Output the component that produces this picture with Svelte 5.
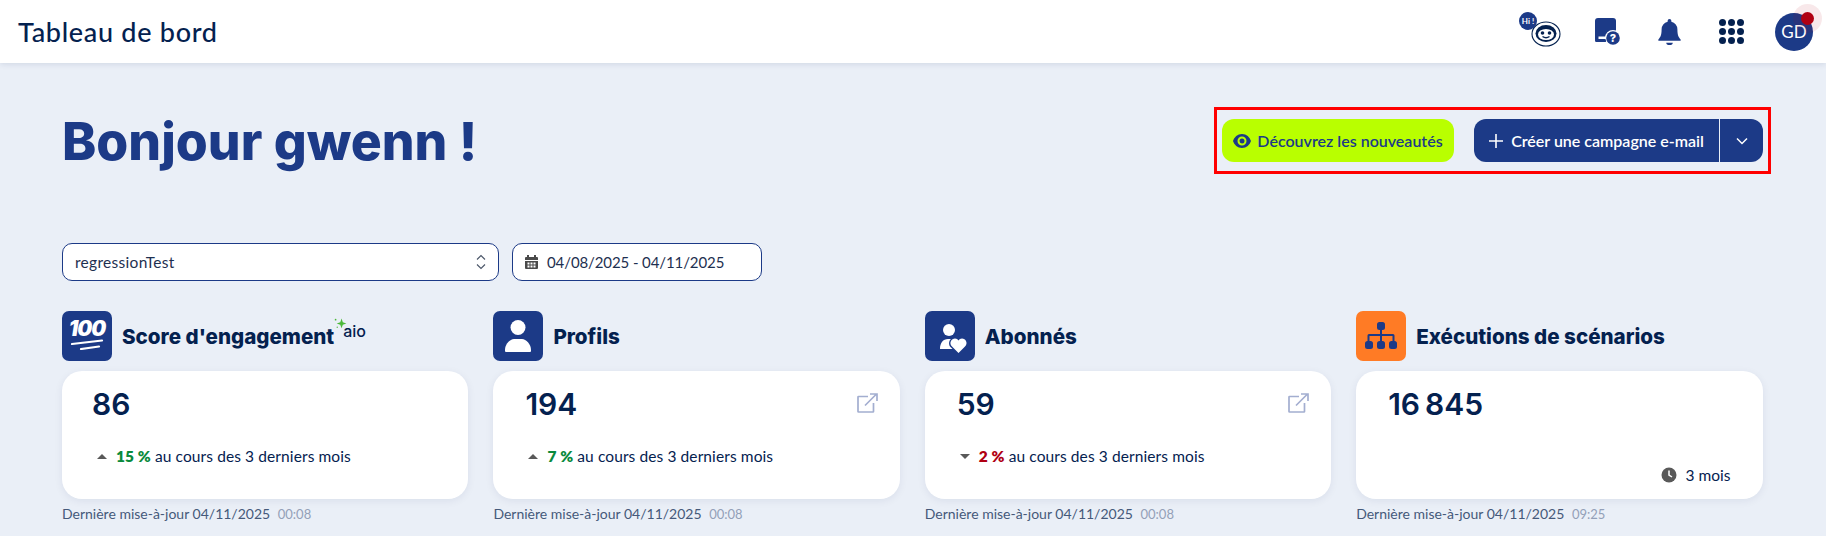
<script>
	const cards = [
		{ title: "Score d'engagement", icon: "score", value: "86", dir: "up", pct: "15 %", time: "00:08", aio: true, left: 30 },
		{ title: "Profils", icon: "user", value: "194", dir: "up", pct: "7 %", time: "00:08", link: true, left: 32 },
		{ title: "Abonnés", icon: "heart", value: "59", dir: "down", pct: "2 %", time: "00:08", link: true, left: 32 },
		{ title: "Exécutions de scénarios", icon: "tree", value: "16\u202f845", time: "09:25", orange: true, left: 32 }
	];
</script>

<div class="page">
	<header class="topbar">
		<h1 class="page-title">Tableau de bord</h1>
		<div class="tools">
			<div class="tool hi">
				<span class="hi-badge">Hi !</span>
				<svg width="30" height="26" viewBox="0 0 30 26" fill="none" stroke="#04214f">
					<ellipse cx="15" cy="13" rx="14" ry="12" stroke-width="1.100" />
					<ellipse cx="15" cy="12.500" rx="10.500" ry="8.500" fill="#04214f" stroke="none" />
					<ellipse cx="15" cy="13.500" rx="8" ry="5.500" fill="#fff" stroke="none" />
					<circle cx="11.500" cy="12" r="1.800" fill="#04214f" stroke="none" />
					<circle cx="18.500" cy="12" r="1.800" fill="#04214f" stroke="none" />
					<path d="M11.500 15.500q3.500 2.500 7 0" stroke-width="1.400" />
				</svg>
			</div>
			<div class="tool">
				<svg width="25" height="27" viewBox="0 0 25 27">
					<rect width="21" height="24" rx="3" fill="#1c3a87" />
					<circle cx="18" cy="20" r="8" fill="#fff" />
					<rect x="3.500" y="18.500" width="10" height="2.500" fill="#fff" />
					<rect x="0" y="21" width="11" height="3" rx="1.500" fill="#1c3a87" />
					<circle cx="18" cy="20" r="6.800" fill="#1c3a87" />
					<text x="18" y="24" text-anchor="middle" font-size="11" font-weight="800" font-family="Inter" fill="#fff">?</text>
				</svg>
			</div>
			<div class="tool">
				<svg width="23" height="26" viewBox="0 0 24 28" fill="#1c3a87">
					<path d="M12 0a2 2 0 0 1 2 2v1a8 8 0 0 1 6.500 8c0 7 1.500 8.500 3.500 11v1.500H0V22c2-2.500 3.500-4 3.500-11A8 8 0 0 1 10 3V2a2 2 0 0 1 2-2z" />
					<path d="M8.500 25.500h7a3.500 2.500 0 0 1-7 0z" />
				</svg>
			</div>
			<div class="tool">
				<div class="apps">
					{#each Array(9) as _}
						<span></span>
					{/each}
				</div>
			</div>
			<div class="avatar">
				GD
				<span class="notif"></span>
			</div>
		</div>
	</header>

	<main>
		<section class="hero">
			<h2 class="hello">Bonjour gwenn !</h2>
			<div class="actions">
				<button class="btn-new">
					<svg width="18" height="14" viewBox="0 0 18 14" fill="#1c3a87">
						<path fill-rule="evenodd" d="M9 0c4.500 0 7.800 3.300 9 7-1.200 3.700-4.500 7-9 7S1.200 10.700 0 7c1.200-3.700 4.500-7 9-7zm0 2.500a4.500 4.500 0 1 0 0 9 4.500 4.500 0 0 0 0-9zm0 2a2.500 2.500 0 1 1 0 5 2.500 2.500 0 0 1 0-5z" />
					</svg>
					Découvrez les nouveautés
				</button>
				<div class="split">
					<button class="btn-main">
						<svg width="14" height="14" viewBox="0 0 14 14" stroke="#fff" stroke-width="1.600"><path d="M7 0v14M0 7h14" /></svg>
						Créer une campagne e-mail
					</button>
					<button class="btn-caret" aria-label="Plus">
						<svg width="12" height="8" viewBox="0 0 12 8" fill="none" stroke="#fff" stroke-width="1.500"><path d="M1 1.500l5 5 5-5" /></svg>
					</button>
				</div>
			</div>
		</section>

		<section class="filters">
			<div class="field select">
				<span>regressionTest</span>
				<svg width="10" height="16" viewBox="0 0 10 16" fill="none" stroke="#4a5568" stroke-width="1.100"><path d="M1 5.500l4-4 4 4M1 10.500l4 4 4-4" /></svg>
			</div>
			<div class="field date">
				<svg width="13" height="14" viewBox="0 0 13 14" fill="#4a4a4a">
					<path d="M2 0h2v2h5V0h2v2h1a1 1 0 0 1 1 1v2H0V3a1 1 0 0 1 1-1h1zM0 6h13v7a1 1 0 0 1-1 1H1a1 1 0 0 1-1-1z" />
					<path d="M2.500 7.500h2v2h-2zM5.500 7.500h2v2h-2zM8.500 7.500h2v2h-2zM2.500 10.500h2v2h-2zM5.500 10.500h2v2h-2zM8.500 10.500h2v2h-2z" fill="#fff" />
				</svg>
				<span>04/08/2025 - 04/11/2025</span>
			</div>
		</section>

		<section class="grid">
			{#each cards as card}
				<article>
					<div class="card-head">
						<div class="badge" class:orange={card.orange}>
							{#if card.icon === "score"}
								<span class="hundred">100</span>
								<svg class="hundred-lines" width="34" height="11" viewBox="0 0 34 11" stroke="#fff" stroke-width="2.200" stroke-linecap="round"><path d="M2 5L32 1.500M11 10L29 7.500" /></svg>
							{:else if card.icon === "user"}
								<svg width="26" height="32" viewBox="0 0 26 32" fill="#fff">
									<circle cx="13" cy="7.500" r="7.500" />
									<path d="M0 31v-1c0-6 5-11 9-11h8c4 0 9 5 9 11v1a1 1 0 0 1-1 1H1a1 1 0 0 1-1-1z" />
								</svg>
							{:else if card.icon === "heart"}
								<svg width="50" height="50" viewBox="0 0 50 50" fill="#fff">
									<circle cx="24" cy="19" r="6" />
									<path d="M15 38c0-6 3-10 8-10h3c-2.500 2-2.500 6-.5 8l2 2z" />
									<path d="M33.500 42l-6.500-6.500c-3.500-3.500-.5-8 3-8 1.500 0 2.800.8 3.500 2 .7-1.200 2-2 3.500-2 3.500 0 6.500 4.500 3 8z" />
								</svg>
							{:else}
								<svg width="32" height="28" viewBox="0 0 32 28" fill="#1c3a87">
									<rect x="12" y="0" width="8" height="8" rx="2.500" />
									<rect x="0" y="19" width="8" height="8" rx="2.500" />
									<rect x="12" y="19" width="8" height="8" rx="2.500" />
									<rect x="24" y="19" width="8" height="8" rx="2.500" />
									<path d="M15 7h2v5h11a1.500 1.500 0 0 1 1.500 1.500V20h-2v-6H17v6h-2v-6H4.500v6h-2v-6.500A1.500 1.500 0 0 1 4 12h11z" />
								</svg>
							{/if}
						</div>
						<h3>{card.title}</h3>
						{#if card.aio}
							<span class="aio">
								<svg width="14" height="12" viewBox="0 0 13 11" fill="#4cb93a"><path d="M7 0.500l1.200 3.300 3.300 1.200-3.300 1.200L7 9.500 5.800 6.200 2.500 5l3.300-1.200z" /><circle cx="1.500" cy="1.500" r="0.800" /><circle cx="3" cy="8.500" r="0.600" /></svg>
								<span>aio</span>
							</span>
						{/if}
					</div>
					<div class="card">
						<div class="value-row" style="padding-left: {card.left}px">
							<span class="value">{card.value}</span>
							{#if card.link}
								<svg class="ext" width="21" height="20" viewBox="0 0 21 20" fill="none" stroke="#a3aed0" stroke-width="1.700">
									<path d="M11 3.500H1.500a.5.5 0 0 0-.5.500V18.500a.5.5 0 0 0 .5.500H16a.5.5 0 0 0 .5-.5V10" />
									<path d="M8 12.500L19.500 1M13 1h7v7" />
								</svg>
							{/if}
						</div>
						{#if card.dir}
							<p class="trend">
								<span class="caret {card.dir}"></span>
								<b class={card.dir}>{card.pct}</b> au cours des 3 derniers mois
							</p>
						{:else}
							<p class="period">
								<svg width="16" height="16" viewBox="0 0 16 16">
									<circle cx="8" cy="8" r="7.500" fill="#595959" />
									<path d="M8 3.500V8l3 2" stroke="#fff" stroke-width="1.500" fill="none" />
								</svg>
								<span>3 mois</span>
							</p>
						{/if}
					</div>
					<div class="updated">
						Dernière mise-à-jour 04/11/2025 <small>{card.time}</small>
					</div>
				</article>
			{/each}
		</section>
	</main>
</div>

<style>
	:global(body) {
		margin: 0;
		background-color: #eaeff7;
	}

	.page {
		height: 536px;
		overflow: hidden;
		font-family: "Lato", "Open Sans", sans-serif;
		color: #04214f;
	}

	.topbar {
		display: flex;
		justify-content: space-between;
		align-items: center;
		height: 63px;
		padding: 0 13px 0 18px;
		background-color: #fff;
		box-shadow: 0 1px 6px rgba(4, 33, 79, 0.12);
	}
	.page-title {
		margin: 0;
		font-size: 27px;
		font-weight: 500;
		letter-spacing: 0.7px;
		color: #04214f;
	}
	.tools {
		display: flex;
		align-items: center;
	}
	.tool {
		position: relative;
		display: flex;
		justify-content: center;
		align-items: center;
		width: 62px;
		height: 40px;
	}
	.hi svg {
		margin: 4px 0 0 1px;
	}
	.hi-badge {
		position: absolute;
		left: 5px;
		top: 0;
		width: 18px;
		height: 18px;
		border-radius: 50%;
		background-color: #1c3a87;
		color: #fff;
		font-size: 8px;
		font-weight: 700;
		line-height: 18px;
		text-align: center;
	}
	.apps {
		display: grid;
		grid-template-columns: repeat(3, 7px);
		gap: 2px;
	}
	.apps span {
		width: 7px;
		height: 7px;
		border-radius: 50%;
		background-color: #04214f;
	}
	.avatar {
		position: relative;
		width: 38px;
		height: 38px;
		margin-left: 13px;
		border-radius: 50%;
		background-color: #1c3a87;
		color: #fff;
		font-size: 17px;
		line-height: 38px;
		text-align: center;
	}
	.notif {
		position: absolute;
		right: -1px;
		top: -1px;
		width: 13px;
		height: 13px;
		border-radius: 50%;
		background-color: #b00012;
		box-shadow: 0 0 0 8px rgba(176, 0, 18, 0.09);
	}

	main {
		padding: 0 63.500px 0 62px;
	}

	.hero {
		display: flex;
		justify-content: space-between;
		align-items: flex-start;
		height: 180px;
	}
	.hello {
		margin: 49px 0 0;
		font-family: "Inter", sans-serif;
		font-size: 51.700px;
		font-weight: 800;
		line-height: 58px;
		color: #1c3a87;
	}
	.actions {
		display: flex;
		gap: 20px;
		margin: 44px -8.500px 0 0;
		padding: 9px 5px;
		border: 3px solid #f00;
	}
	button {
		display: flex;
		align-items: center;
		height: 43px;
		border: none;
		font-family: inherit;
		font-size: 16px;
		font-weight: 600;
	}
	.btn-new {
		gap: 6px;
		width: 232px;
		justify-content: center;
		border-radius: 12px;
		background-color: #b9ff00;
		color: #1c3a87;
	}
	.split {
		display: flex;
		gap: 1px;
	}
	.btn-main {
		gap: 8px;
		width: 245px;
		justify-content: center;
		border-radius: 12px 0 0 12px;
		background-color: #1c3a87;
		color: #fff;
	}
	.btn-caret {
		justify-content: center;
		width: 43px;
		border-radius: 0 12px 12px 0;
		background-color: #1c3a87;
	}

	.filters {
		display: flex;
		gap: 13px;
	}
	.field {
		display: flex;
		align-items: center;
		box-sizing: border-box;
		height: 38px;
		padding: 0 12px;
		border: 1px solid #1c3a87;
		border-radius: 10px;
		background-color: #fff;
		font-size: 15.500px;
		letter-spacing: 0.3px;
		color: #1e3050;
	}
	.select {
		justify-content: space-between;
		width: 437px;
	}
	.date {
		gap: 9px;
		width: 250px;
		font-size: 15px;
		letter-spacing: -0.1px;
	}

	.grid {
		display: grid;
		grid-template-columns: repeat(4, 1fr);
		gap: 25px;
		margin-top: 30px;
	}
	.card-head {
		display: flex;
		align-items: center;
		height: 50px;
		margin-bottom: 10px;
	}
	.badge {
		position: relative;
		display: flex;
		flex-direction: column;
		justify-content: center;
		align-items: center;
		flex: none;
		width: 50px;
		height: 50px;
		margin-right: 10px;
		border-radius: 7px;
		background-color: #1c3a87;
	}
	.badge.orange {
		background-color: #ff7b25;
	}
	.hundred {
		margin-top: -3px;
		color: #fff;
		font-family: "Inter", sans-serif;
		font-size: 21px;
		font-style: italic;
		font-weight: 900;
		line-height: 20px;
		letter-spacing: -1px;
	}
	h3 {
		margin: 0;
		font-family: "Inter", sans-serif;
		font-size: 20.600px;
		font-weight: 800;
		color: #04214f;
	}
	.aio {
		display: flex;
		align-self: flex-start;
		margin: 7px 0 0 0;
		font-family: "Inter", sans-serif;
		font-size: 16px;
		font-weight: 500;
		line-height: 14px;
	}
	.aio span {
		margin: 6px 0 0 -5px;
	}
	.card {
		position: relative;
		box-sizing: border-box;
		height: 128px;
		border-radius: 20px;
		background-color: #fff;
		box-shadow: 0 2px 8px rgba(4, 33, 79, 0.07);
	}
	.value-row {
		display: flex;
		justify-content: space-between;
		align-items: flex-start;
		height: 58px;
		padding: 14px 22px 0 0;
	}
	.value {
		font-family: "Inter", sans-serif;
		font-size: 30px;
		font-weight: 600;
		line-height: 38px;
	}
	.ext {
		margin-top: 8px;
	}
	.trend {
		display: flex;
		align-items: center;
		margin: 4px 0 0 35px;
		font-size: 15.500px;
		letter-spacing: 0.1px;
		white-space: pre;
	}
	.caret {
		width: 0;
		height: 0;
		margin-right: 9px;
		border-left: 5px solid transparent;
		border-right: 5px solid transparent;
	}
	.caret.up {
		border-bottom: 5px solid #595959;
	}
	.caret.down {
		border-top: 5px solid #595959;
	}
	b {
		font-weight: 800;
	}
	b.up {
		color: #0a8a3c;
	}
	b.down {
		color: #b00012;
	}
	.period {
		display: flex;
		justify-content: flex-end;
		align-items: center;
		gap: 9px;
		margin: 23px 32px 0 0;
		font-size: 15.500px;
	}
	.updated {
		margin-top: 6px;
		font-size: 14px;
		color: #45597a;
	}
	small {
		margin-left: 4px;
		font-size: 13px;
		color: #93a0b8;
	}
</style>
